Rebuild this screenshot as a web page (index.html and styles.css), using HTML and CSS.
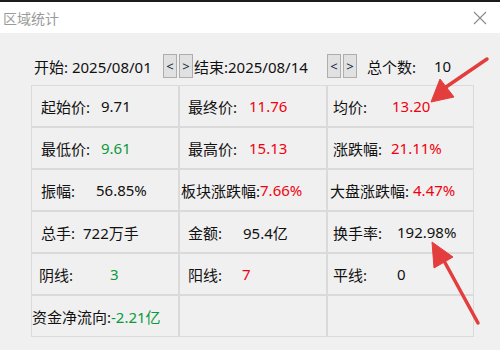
FILE: index.html
```html
<!DOCTYPE html>
<html lang="zh-CN">
<head>
    <meta charset="UTF-8">
    <title>区域统计</title>
    <link rel="stylesheet" href="styles.css">
</head>
<body>
    <div class="window">
        <div class="titlebar">
            <span class="title">区域统计</span>
            <svg class="close" width="14" height="14" viewBox="0 0 14 14">
                <path d="M1 1 L13 13 M13 1 L1 13" stroke="#8a8a8a" stroke-width="1.1" fill="none"/>
            </svg>
        </div>

        <div class="content">
            <div class="range">
                <span class="start">开始: 2025/08/01</span>
                <button class="step">&lt;</button>
                <button class="step">&gt;</button>
                <span class="end">结束:2025/08/14</span>
                <button class="step">&lt;</button>
                <button class="step">&gt;</button>
                <span class="count-label">总个数:</span>
                <span class="count">10</span>
            </div>

            <div class="stats">
                <div class="cell c1"><span class="k k60">起始价:</span><span>9.71</span></div>
                <div class="cell c2"><span class="k k61">最终价:</span><span class="up">11.76</span></div>
                <div class="cell c3"><span class="k k59">均价:</span><span class="up">13.20</span></div>

                <div class="cell c1"><span class="k k60">最低价:</span><span class="down">9.61</span></div>
                <div class="cell c2"><span class="k k61">最高价:</span><span class="up">15.13</span></div>
                <div class="cell c3"><span class="k k58">涨跌幅:</span><span class="up">21.11%</span></div>

                <div class="cell c1"><span class="k k55">振幅:</span><span>56.85%</span></div>
                <div class="cell tight"><span class="k">板块涨跌幅:</span><span class="up">7.66%</span></div>
                <div class="cell tight2"><span class="k">大盘涨跌幅:</span><span class="up sp">4.47%</span></div>

                <div class="cell c1"><span class="k k42">总手:</span><span>722万手</span></div>
                <div class="cell c2"><span class="k k55">金额:</span><span>95.4亿</span></div>
                <div class="cell c3"><span class="k k64">换手率:</span><span>192.98%</span></div>

                <div class="cell c1b"><span class="k k71">阴线:</span><span class="down">3</span></div>
                <div class="cell c2"><span class="k k54">阳线:</span><span class="up">7</span></div>
                <div class="cell c3"><span class="k k64">平线:</span><span>0</span></div>

                <div class="cell flush"><span class="k">资金净流向:</span><span class="down">-2.21亿</span></div>
                <div class="cell"></div>
                <div class="cell"></div>
            </div>
        </div>

        <!-- annotation arrows drawn over the dialog -->
        <svg class="arrows" width="500" height="350" viewBox="0 0 500 350">
            <g fill="#e43d3d" stroke="#e43d3d">
                <line x1="487" y1="59" x2="446" y2="87" stroke-width="3.5" stroke-linecap="round"/>
                <polygon points="431,102 440,79 454,97" stroke-width="1" stroke-linejoin="round"/>
                <line x1="478" y1="323" x2="443" y2="259" stroke-width="3.5" stroke-linecap="round"/>
                <polygon points="432,242 453,257 434,268" stroke-width="1" stroke-linejoin="round"/>
            </g>
        </svg>
    </div>
</body>
</html>
```

FILE: styles.css
```css
body {
    margin: 0;
    background: #f0f0f0;
    font-family: "Noto Sans", "Noto Sans CJK SC", sans-serif;
    font-size: 15px;
    color: #111;
}
.window {
    position: relative;
    width: 500px;
    height: 350px;
    overflow: hidden;
    border-top: 2px solid #1c1c1c;
    box-sizing: border-box;
}
.titlebar {
    height: 31px;
    background: #fff;
    display: flex;
    align-items: center;
    justify-content: space-between;
    padding: 0 13px 0 3px;
}
.title {
    font-size: 14px;
    color: #9a9a9a;
    font-family: "Noto Sans CJK SC", sans-serif;
}
.close {
    display: block;
}
.content {
    padding: 21px 0 0 31px;
}
.range {
    display: flex;
    align-items: center;
    height: 24px;
    white-space: pre;
}
.start {
    margin-left: 3px;
    width: 129px;
}
.step {
    width: 14px;
    height: 24px;
    padding: 0;
    margin: 0 2px 0 0;
    background: #e1e1e1;
    border: 1px solid #adadad;
    font-family: "Noto Sans", sans-serif;
    font-size: 13px;
    color: #0c1a40;
    line-height: 20px;
}
.end {
    width: 133px;
    margin-left: -1px;
}
.count-label {
    margin-left: 8px;
    width: 67px;
}
.stats {
    margin-top: 7px;
    width: 443px;
    display: grid;
    grid-template-columns: 148px 148px 147px;
    grid-auto-rows: 42px;
}
.cell {
    border: 1px solid #dadada;
    display: flex;
    align-items: center;
    white-space: pre;
}
.c1 { padding-left: 9px; }
.c1b { padding-left: 7px; }
.c2 { padding-left: 8px; }
.c3 { padding-left: 5px; }
.tight { padding-left: 1px; }
.tight2 { padding-left: 2px; }
.flush { padding-left: 0; }
.k {
    display: inline-block;
}
.k42 { width: 42px; }
.k54 { width: 54px; }
.k55 { width: 55px; }
.k58 { width: 58px; }
.k59 { width: 59px; }
.k60 { width: 60px; }
.k61 { width: 61px; }
.k64 { width: 64px; }
.k71 { width: 71px; }
.sp { margin-left: 4px; }
.up { color: #f2000f; }
.down { color: #0a9a3c; }
.arrows {
    position: absolute;
    left: 0;
    top: -2px;
    pointer-events: none;
}
```
